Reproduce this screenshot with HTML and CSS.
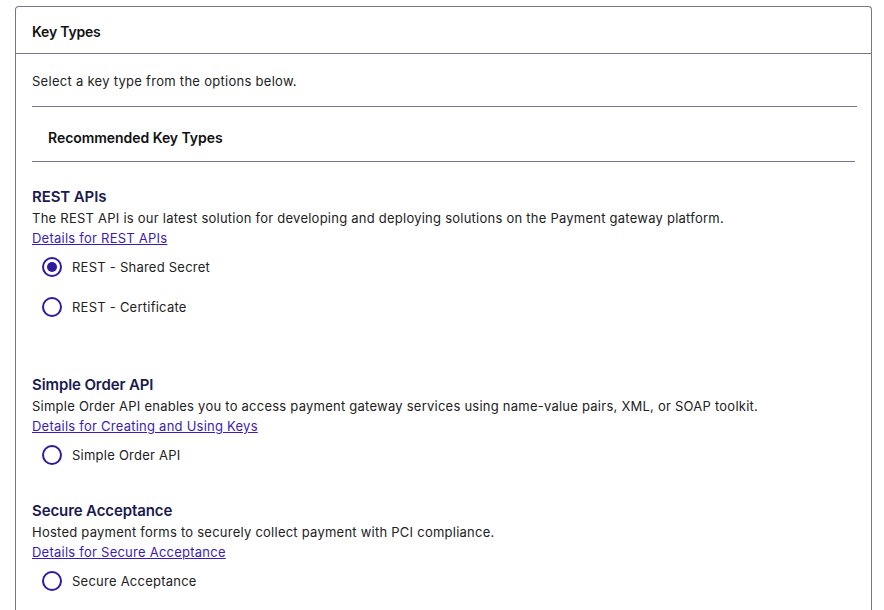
FILE: index.html
```html
<!DOCTYPE html>
<html lang="en">
<head>
<meta charset="utf-8">
<title>Key Types</title>
<link rel="stylesheet" href="styles.css">
</head>
<body>
<div class="card">
  <div class="card-header">Key Types</div>
  <div class="card-body">
    <p class="intro">Select a key type from the options below.</p>
    <hr class="rule rule-top">
    <h2 class="subhead">Recommended Key Types</h2>
    <hr class="rule rule-bottom">

    <section class="group group-rest">
      <h3 class="group-title">REST APIs</h3>
      <p class="group-desc">The REST API is our latest solution for developing and deploying solutions on the Payment gateway platform.</p>
      <a class="group-link" href="#">Details for REST APIs</a>
      <div class="options">
        <label class="option"><span class="radio checked"></span><span class="option-label">REST - Shared Secret</span></label>
        <label class="option"><span class="radio"></span><span class="option-label">REST - Certificate</span></label>
      </div>
    </section>

    <section class="group">
      <h3 class="group-title">Simple Order API</h3>
      <p class="group-desc">Simple Order API enables you to access payment gateway services using name-value pairs, XML, or SOAP toolkit.</p>
      <a class="group-link" href="#">Details for Creating and Using Keys</a>
      <div class="options">
        <label class="option"><span class="radio"></span><span class="option-label">Simple Order API</span></label>
      </div>
    </section>

    <section class="group">
      <h3 class="group-title">Secure Acceptance</h3>
      <p class="group-desc">Hosted payment forms to securely collect payment with PCI compliance.</p>
      <a class="group-link" href="#">Details for Secure Acceptance</a>
      <div class="options">
        <label class="option"><span class="radio"></span><span class="option-label">Secure Acceptance</span></label>
      </div>
    </section>
  </div>
</div>
</body>
</html>
```
FILE: styles.css
```css
* { box-sizing: border-box; }
html, body { margin: 0; padding: 0; background: #fff; }
body {
  font-family: Inter, "Noto Sans", "Liberation Sans", sans-serif;
  font-size: 13px;
  color: #222222;
  padding: 6px 12px 0 15px;
  height: 610px;
  overflow: hidden;
}
.card {
  border: 1px solid #78738f;
  border-bottom: none;
  border-radius: 4px 4px 0 0;
  height: 604px;
}
.card-header {
  padding: 15px 16px 11px;
  line-height: 20px;
  font-size: 14px;
  font-weight: 600;
  color: #111;
  border-bottom: 1px solid #78738f;
  letter-spacing: -0.2px;
}
.card-body { padding: 0 14px 0 16px; }
.intro {
  margin: 17px 0 15px;
  line-height: 20px;
  letter-spacing: 0.28px;
}
.rule {
  border: none;
  border-top: 1px solid #78738f;
  margin: 0;
}
.rule-bottom { margin-right: 2px; }
.subhead {
  margin: 0;
  padding: 21px 16px 13px;
  font-size: 14px;
  line-height: 20px;
  font-weight: 600;
  color: #111;
  letter-spacing: -0.05px;
}
.group { margin-top: 27px; }
.group-rest { margin-top: 24px; }
.group-rest .options { padding-bottom: 22px; }
.group-title {
  margin: 0;
  font-size: 15px;
  line-height: 21px;
  font-weight: 600;
  color: #1b1a4f;
  letter-spacing: -0.1px;
}
.group-desc {
  margin: 0;
  padding-top: 1px;
  line-height: 21px;
  letter-spacing: 0.24px;
}
.group-link {
  display: block;
  margin-top: -1px;
  line-height: 21px;
  color: #3b1db3;
  text-decoration: underline;
  letter-spacing: 0.24px;
}
.options {
  display: flex;
  flex-direction: column;
  gap: 3px;
  margin-top: -1px;
}
.option {
  display: flex;
  align-items: center;
  gap: 10px;
  height: 37px;
  padding-left: 10px;
  cursor: pointer;
}
.radio {
  width: 20px;
  height: 20px;
  border: 2px solid #2f1a9f;
  border-radius: 50%;
  display: flex;
  align-items: center;
  justify-content: center;
  flex: none;
}
.radio.checked::after {
  content: "";
  width: 10px;
  height: 10px;
  border-radius: 50%;
  background: #2f1a9f;
}
.option-label { line-height: 20px; letter-spacing: 0.24px; }
```
